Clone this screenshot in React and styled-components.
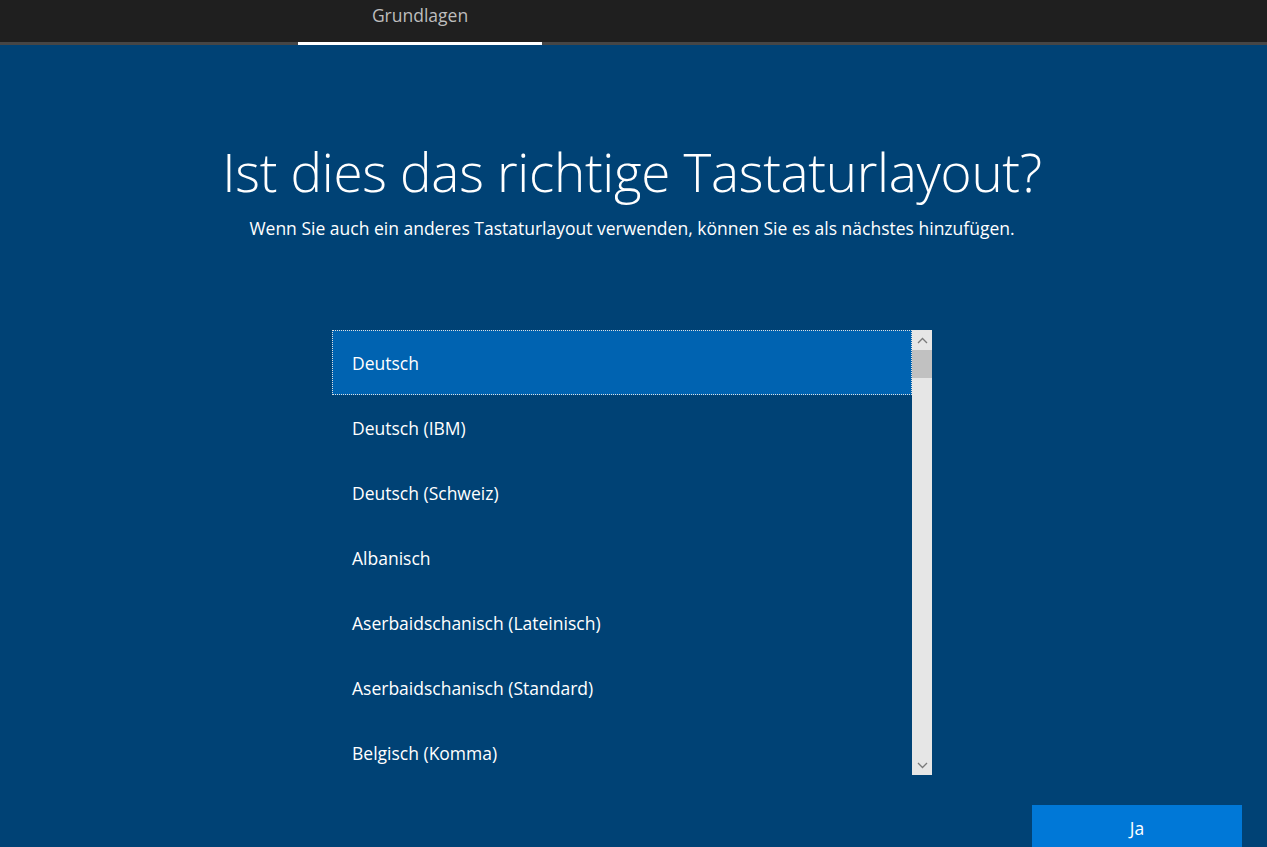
import { createGlobalStyle, styled } from 'styled-components';

const GlobalStyle = createGlobalStyle`
  html, body {
    margin: 0;
    padding: 0;
    height: 100%;
    overflow: hidden;
    background: #004275;
  }
  body {
    font-family: "Open Sans", "Noto Sans", sans-serif;
    color: #ffffff;
  }
`;

const Page = styled.div`
  width: 1267px;
  height: 847px;
  display: flex;
  flex-direction: column;
  background: #004275;
  overflow: hidden;
`;

const TopBar = styled.div`
  height: 45px;
  flex-shrink: 0;
  display: flex;
  padding-left: 298px;
  background: #1f1f1f;
  box-shadow: inset 0 -3px 0 #464646;
`;

const Tab = styled.div`
  width: 244px;
  box-sizing: border-box;
  padding-top: 3px;
  text-align: center;
  font-size: 17.5px;
  color: #bdbdbd;
  border-bottom: 3px solid ${p => (p.$active ? '#ffffff' : 'transparent')};
`;

const Main = styled.div`
  flex: 1;
  display: flex;
  flex-direction: column;
  align-items: center;
  padding-top: 95px;
  padding-right: 3px;
`;

const Title = styled.h1`
  margin: 0;
  font-size: 53px;
  font-weight: 300;
  line-height: 64px;
  letter-spacing: -0.3px;
`;

const Subtitle = styled.p`
  margin: 12px 0 0;
  font-size: 17.5px;
  line-height: 24px;
`;

const ListBox = styled.div`
  margin-top: 90px;
  width: 600px;
  height: 445px;
  display: flex;
`;

const Items = styled.ul`
  flex: 1;
  margin: 0;
  padding: 0;
  list-style: none;
  overflow: hidden;
`;

const Item = styled.li`
  height: 65px;
  box-sizing: border-box;
  display: flex;
  align-items: center;
  padding-left: 19px;
  font-size: 17.5px;
  background: ${p => (p.$selected ? '#0063b1' : 'transparent')};
  border: 1px dotted ${p => (p.$selected ? '#e0e0e0' : 'transparent')};
`;

const ScrollBar = styled.div`
  width: 20px;
  display: flex;
  flex-direction: column;
  background: #e6e6e6;
`;

const Arrow = styled.div`
  height: 20px;
  display: flex;
  align-items: center;
  justify-content: center;
`;

const Track = styled.div`
  flex: 1;
`;

const Thumb = styled.div`
  height: 28px;
  background: #c1c1c1;
`;

const Footer = styled.div`
  align-self: stretch;
  display: flex;
  justify-content: flex-end;
  padding-right: 22px;
  margin-top: 30px;
`;

const Button = styled.button`
  width: 210px;
  height: 48px;
  border: none;
  background: #0078d7;
  color: #ffffff;
  font-family: inherit;
  font-size: 17.5px;
  padding: 0 0 2px;
`;

const Chevron = ({ up }) => (
  <svg width="11" height="7" viewBox="0 0 11 7">
    <path
      d={up ? 'M1 6 L5.5 1.5 L10 6' : 'M1 1 L5.5 5.5 L10 1'}
      fill="none"
      stroke="#7a7a7a"
      strokeWidth="1.3"
    />
  </svg>
);

const layouts = [
  'Deutsch',
  'Deutsch (IBM)',
  'Deutsch (Schweiz)',
  'Albanisch',
  'Aserbaidschanisch (Lateinisch)',
  'Aserbaidschanisch (Standard)',
  'Belgisch (Komma)',
];

export default function App() {
  return (
    <Page>
      <GlobalStyle />
      <TopBar>
        <Tab $active>Grundlagen</Tab>
      </TopBar>
      <Main>
        <Title>Ist dies das richtige Tastaturlayout?</Title>
        <Subtitle>
          Wenn Sie auch ein anderes Tastaturlayout verwenden, können Sie es als nächstes hinzufügen.
        </Subtitle>
        <ListBox>
          <Items>
            {layouts.map((name, i) => (
              <Item key={name} $selected={i === 0}>{name}</Item>
            ))}
          </Items>
          <ScrollBar>
            <Arrow><Chevron up /></Arrow>
            <Thumb />
            <Track />
            <Arrow><Chevron /></Arrow>
          </ScrollBar>
        </ListBox>
        <Footer>
          <Button>Ja</Button>
        </Footer>
      </Main>
    </Page>
  );
}
